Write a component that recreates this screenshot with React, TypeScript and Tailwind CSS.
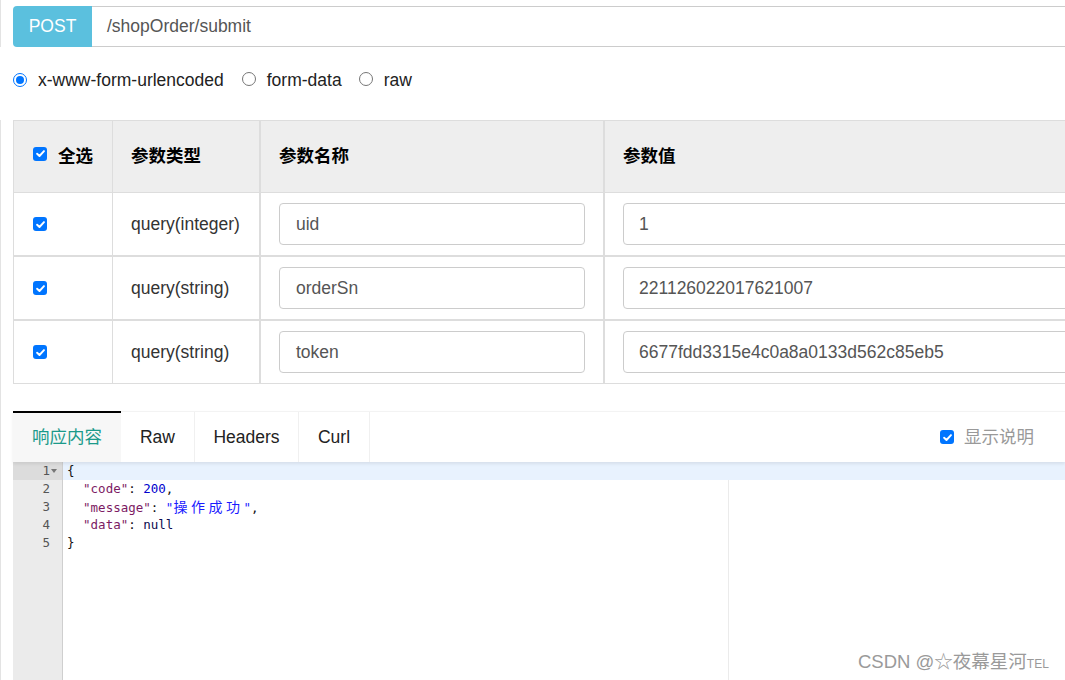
import React from "react";

const sans = '"Liberation Sans", Arial, "Noto Sans CJK SC", sans-serif';
const mono = '"DejaVu Sans Mono", "Liberation Mono", "Noto Sans CJK SC", monospace';

function Check({ className = "" }: { className?: string }) {
  return (
    <span
      className={
        "inline-flex w-[14px] h-[14px] rounded-[3px] bg-[#0075ff] items-center justify-center shrink-0 " +
        className
      }
    >
      <svg width="11" height="11" viewBox="0 0 12 12">
        <path d="M2.3 6.2 L4.9 8.7 L9.8 3.4" fill="none" stroke="#fff" strokeWidth="2.1" strokeLinecap="round" strokeLinejoin="round" />
      </svg>
    </span>
  );
}

function Radio({ checked }: { checked?: boolean }) {
  return checked ? (
    <span className="inline-flex w-[14px] h-[14px] rounded-full border-[1.5px] border-[#0075ff] items-center justify-center shrink-0">
      <span className="w-[8px] h-[8px] rounded-full bg-[#0075ff]" />
    </span>
  ) : (
    <span className="inline-block w-[14px] h-[14px] rounded-full border border-[#767676] shrink-0" />
  );
}

const rows = [
  { type: "query(integer)", name: "uid", value: "1", h: "h-[64px] border-b-2" },
  { type: "query(string)", name: "orderSn", value: "221126022017621007", h: "h-[64px] border-b-2" },
  { type: "query(string)", name: "token", value: "6677fdd3315e4c0a8a0133d562c85eb5", h: "h-[62px]" },
];

const K = ({ children }: { children: React.ReactNode }) => <span className="text-[#7c1a63]">{children}</span>;

export default function App() {
  return (
    <div className="w-[1065px] h-[680px] overflow-hidden bg-white relative flex flex-col" style={{ fontFamily: sans }}>
      {/* URL bar */}
      <div className="h-[47px] shrink-0 border-l border-[#e3e3e3] pt-[6px] pl-[12px]">
        <div className="flex h-[41px] w-[1100px]">
          <div className="w-[79px] shrink-0 bg-[#5bc0de] rounded-l-[4px] flex items-center justify-center text-white text-[17.5px]">POST</div>
          <div className="flex-1 border border-l-0 border-[#cccccc] flex items-center pl-[15px] text-[#555] text-[17.5px]">/shopOrder/submit</div>
        </div>
      </div>

      {/* radios */}
      <div className="h-[73px] shrink-0 pl-[13px] pt-[24px]">
        <div className="flex items-center h-[18px] text-[17.5px] text-[#222]">
          <Radio checked />
          <span className="ml-[11px]">x-www-form-urlencoded</span>
          <span className="ml-[18px]"><Radio /></span>
          <span className="ml-[11px]">form-data</span>
          <span className="ml-[17px]"><Radio /></span>
          <span className="ml-[11px]">raw</span>
        </div>
      </div>

      {/* table */}
      <div className="border-l border-[#e3e3e3] pl-[12px] shrink-0">
        <div className="w-[1100px] border-t border-l border-b border-[#dddddd] text-[17.5px]">
          <div className="flex h-[72px] bg-[#eeeeee] border-b border-[#dddddd] font-bold text-black">
            <div className="w-[99px] shrink-0 border-r border-[#dddddd] flex items-center pl-[19px]">
              <Check className="-mt-[6px]" />
              <span className="ml-[11px]">全选</span>
            </div>
            <div className="w-[148px] shrink-0 border-r-2 border-[#dddddd] flex items-center pl-[18px]">参数类型</div>
            <div className="w-[344px] shrink-0 border-r-2 border-[#dddddd] flex items-center pl-[18px]">参数名称</div>
            <div className="flex-1 flex items-center pl-[18px]">参数值</div>
          </div>
          {rows.map((r, i) => (
            <div key={i} className={"flex text-[#333] border-[#dddddd] " + r.h}>
              <div className="w-[99px] shrink-0 border-r border-[#dddddd] flex items-center pl-[19px]">
                <Check />
              </div>
              <div className="w-[148px] shrink-0 border-r-2 border-[#dddddd] flex items-center pl-[18px]">{r.type}</div>
              <div className="w-[344px] shrink-0 border-r-2 border-[#dddddd] flex items-center pl-[18px]">
                <div className="w-[306px] h-[42px] border border-[#cccccc] rounded-[4px] flex items-center pl-[16px] text-[#555]">{r.name}</div>
              </div>
              <div className="flex-1 flex items-center pl-[18px]">
                <div className="w-[500px] h-[42px] border border-[#cccccc] rounded-[4px] flex items-center pl-[15px] text-[#555]">{r.value}</div>
              </div>
            </div>
          ))}
        </div>
      </div>

      {/* tabs */}
      <div className="border-l border-[#e3e3e3] pl-[12px] pt-[27px] shrink-0">
        <div className="flex h-[51px] border-t border-[#f3f3f3] text-[17.5px] items-stretch relative z-10 shadow-[0_2px_3px_rgba(0,0,0,0.08)]">
          <div className="w-[108px] bg-[#f7f7f7] border-t-2 border-black -mt-px flex items-center justify-center text-[#1b9a8a]">响应内容</div>
          <div className="w-[74px] border-r border-[#f0f0f0] flex items-center justify-center text-[#222]">Raw</div>
          <div className="w-[104px] border-r border-[#f0f0f0] flex items-center justify-center text-[#222]">Headers</div>
          <div className="w-[71px] border-r border-[#f0f0f0] flex items-center justify-center text-[#222]">Curl</div>
          <div className="flex-1 flex items-center justify-end pr-[31px] text-[#999]">
            <Check />
            <span className="ml-[10px]">显示说明</span>
          </div>
        </div>
      </div>

      {/* code editor */}
      <div className="flex-1 border-l border-[#e3e3e3] pl-[12px] flex min-h-0">
        <div className="flex flex-1 text-[12.5px] leading-[18px]" style={{ fontFamily: mono }}>
          <div className="w-[50px] bg-[#ebebeb] border-r border-[#cfcfcf] text-[#555] shrink-0">
            {[1, 2, 3, 4, 5].map((n) => (
              <div key={n} className={"h-[18px] flex items-center justify-end pr-[12px] relative " + (n === 1 ? "bg-[#dcdcdc]" : "")}>
                {n}
                {n === 1 && (
                  <svg className="absolute right-[5px] top-[7px]" width="6" height="4" viewBox="0 0 6 4">
                    <path d="M0 0 L6 0 L3 4 Z" fill="#777" />
                  </svg>
                )}
              </div>
            ))}
          </div>
          <div className="flex-1 relative text-[#111]">
            <div className="absolute left-[665px] top-0 bottom-0 w-px bg-[#ebebeb]" />
            <div className="relative h-[18px] bg-[#e8f2fe] pl-[4px] whitespace-pre">{"{"}</div>
            <div className="relative pl-[5px] whitespace-pre">
              <div className="h-[18px]">{"  "}<K>"code"</K>: <span className="text-[#0000cd]">200</span>,</div>
              <div className="h-[18px]">
                {"  "}<K>"message"</K>: <span className="text-[#1a1aff]">"{["操", "作", "成", "功"].map((c) => (
                  <span key={c} className="inline-block w-[17.5px] text-[14px]">{c}</span>
                ))}"</span>,
              </div>
              <div className="h-[18px]">{"  "}<K>"data"</K>: <span className="text-[#0c0c50]">null</span></div>
              <div className="h-[18px] -ml-px">{"}"}</div>
            </div>
          </div>
        </div>
      </div>

      {/* watermark */}
      <div className="absolute left-[858px] top-[648px] text-[18.5px] text-[#9a9a9a] whitespace-nowrap" style={{ textShadow: "0 0 1px #fff" }}>
        CSDN @☆夜幕星河<span className="text-[12px]">TEL</span>
      </div>
    </div>
  );
}
